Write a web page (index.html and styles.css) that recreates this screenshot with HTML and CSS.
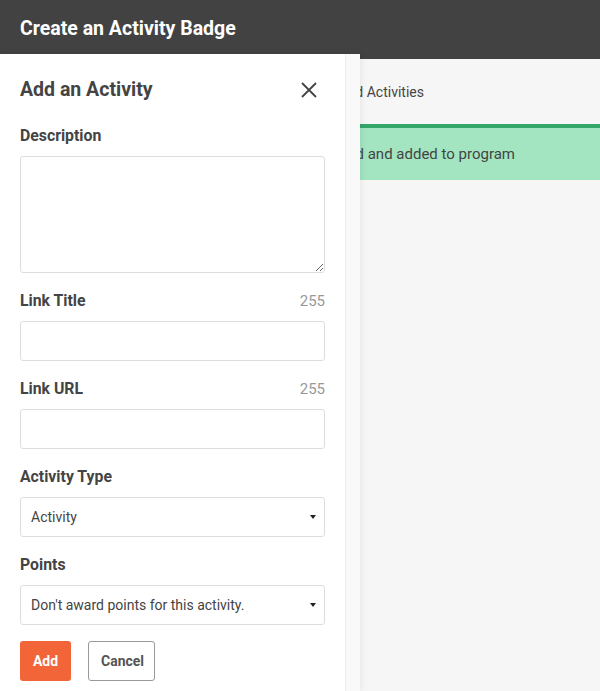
FILE: index.html
```html
<!DOCTYPE html>
<html lang="en">
<head>
    <meta charset="UTF-8">
    <meta name="viewport" content="width=device-width, initial-scale=1.0">
    <title>Create an Activity Badge</title>
    <link rel="stylesheet" href="styles.css">
</head>
<body>
    <header class="topbar">
        <h1>Create an Activity Badge</h1>
    </header>

    <!-- Page behind the drawer: only its right part shows -->
    <main class="page">
        <div class="tabs">
            <span class="clip clip-tab">Required Activities</span>
        </div>
        <div class="alert">
            <span class="clip clip-alert">Activity badge created and added to program</span>
        </div>
    </main>

    <!-- Slide-out drawer -->
    <aside class="drawer">
        <div class="drawer-body">
            <div class="drawer-head">
                <h2>Add an Activity</h2>
                <button class="close" aria-label="Close">
                    <svg width="18" height="18" viewBox="0 0 18 18">
                        <path d="M2 2L16 16M16 2L2 16" stroke="#444" stroke-width="1.8" fill="none"/>
                    </svg>
                </button>
            </div>

            <div class="field">
                <div class="label-row"><label>Description</label></div>
                <textarea class="input textarea"></textarea>
            </div>

            <div class="field">
                <div class="label-row"><label>Link Title</label><span class="count">255</span></div>
                <input class="input" type="text">
            </div>

            <div class="field">
                <div class="label-row"><label>Link URL</label><span class="count">255</span></div>
                <input class="input" type="text">
            </div>

            <div class="field">
                <div class="label-row"><label>Activity Type</label></div>
                <div class="select input">Activity<span class="caret"></span></div>
            </div>

            <div class="field">
                <div class="label-row"><label>Points</label></div>
                <div class="select input">Don't award points for this activity.<span class="caret"></span></div>
            </div>

            <div class="actions">
                <button class="btn btn-primary">Add</button>
                <button class="btn btn-default">Cancel</button>
            </div>
        </div>
        <div class="gutter"></div>
    </aside>
</body>
</html>
```

FILE: styles.css
```css
body {
    font-family: Roboto, "Liberation Sans", sans-serif;
    margin: 0;
    padding: 0;
    background-color: #f6f6f6;
    color: #444;
    height: 691px;
    overflow: hidden;
    position: relative;
}
.topbar {
    background-color: #424242;
    height: 59px;
    padding: 0 20px;
    display: flex;
    align-items: center;
}
.topbar h1 {
    margin: 0 0 3px;
    font-size: 19.5px;
    font-weight: 700;
    color: white;
}
.page {
    margin-left: 360px;
    overflow: hidden;
}
.clip {
    display: block;
    width: 300px;
    white-space: nowrap;
    text-align: right;
    flex: none;
}
.tabs {
    height: 65px;
    display: flex;
    align-items: center;
    font-size: 14px;
}
.clip-tab {
    margin-left: -236px;
}
.alert {
    background: #a3e4c1;
    border-top: 4px solid #35a66a;
    height: 52px;
    display: flex;
    align-items: center;
    font-size: 15px;
}
.clip-alert {
    margin-left: -145px;
}
.drawer {
    position: absolute;
    top: 54px;
    left: 0;
    bottom: 0;
    width: 360px;
    display: flex;
    box-shadow: 2px 0 6px rgba(0, 0, 0, 0.06);
}
.drawer-body {
    flex: 1;
    background: white;
    padding: 0 20px;
}
.gutter {
    width: 14px;
    background: #f9f9f9;
    border-left: 1px solid #ececec;
}
.drawer-head {
    height: 71px;
    display: flex;
    align-items: center;
    justify-content: space-between;
}
.drawer-head h2 {
    margin: 0;
    font-size: 19.5px;
    font-weight: 700;
}
.close {
    background: none;
    border: none;
    padding: 0;
    margin-right: 7px;
    width: 18px;
    height: 18px;
}
.field {
    margin-bottom: 17px;
}
.label-row {
    display: flex;
    justify-content: space-between;
    line-height: 20px;
    padding-top: 1px;
    margin-bottom: 10px;
    font-size: 15px;
}
.label-row label {
    font-weight: 700;
    font-size: 15.8px;
}
.count {
    color: #999;
}
.input {
    display: block;
    box-sizing: border-box;
    width: 100%;
    height: 40px;
    border: 1px solid #ddd;
    border-radius: 3px;
    background: white;
    font-family: inherit;
    margin: 0;
}
.textarea {
    height: 117px;
    resize: vertical;
}
.select {
    display: flex;
    align-items: center;
    justify-content: space-between;
    padding: 0 10px;
    font-size: 14px;
}
.caret {
    width: 0;
    height: 0;
    border-left: 3px solid transparent;
    border-right: 3px solid transparent;
    border-top: 4px solid #222;
    margin-right: -2px;
}
.actions {
    display: flex;
    gap: 17px;
    margin-top: -1px;
}
.btn {
    height: 40px;
    border-radius: 3px;
    font-family: inherit;
    font-size: 14px;
    font-weight: 700;
    padding: 0 12px;
}
.btn-primary {
    background: #f26539;
    border: none;
    color: white;
    width: 51px;
}
.btn-default {
    background: white;
    border: 1px solid #999;
    color: #555;
    width: 67px;
}
```
